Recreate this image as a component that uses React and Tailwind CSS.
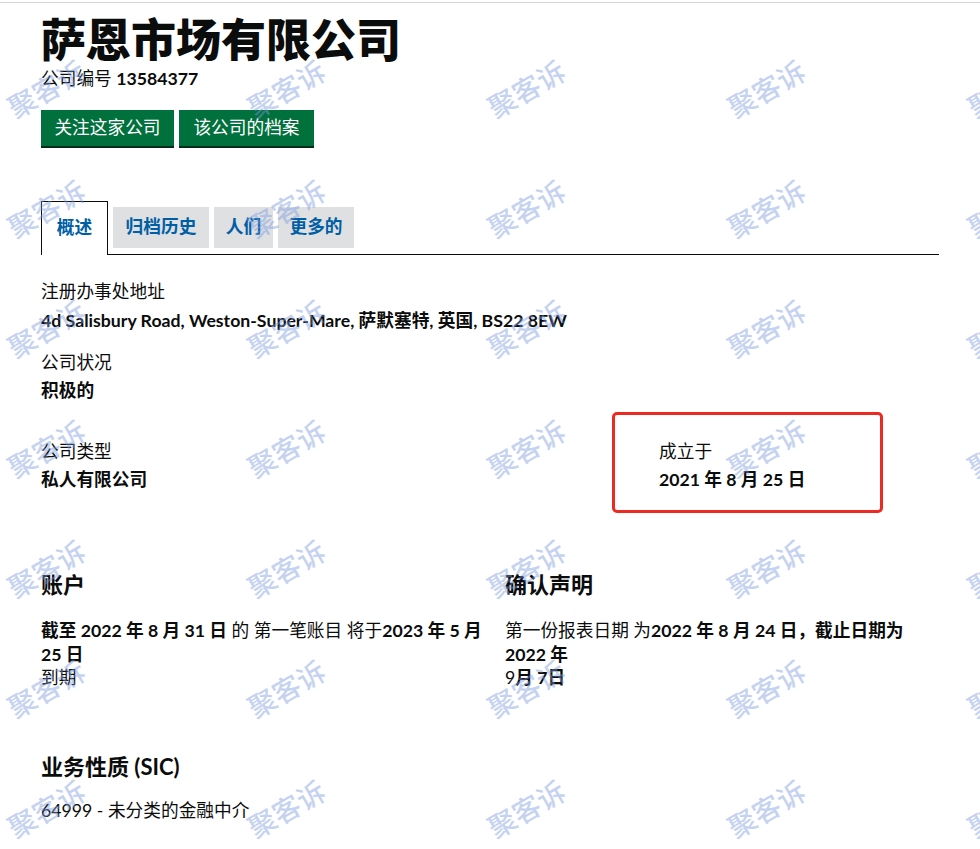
import React from "react";

// Company overview page (Companies House style), translated to Chinese,
// with a repeated "聚客诉" watermark laid over everything.
const FONT = {
  fontFamily: 'Lato, "Noto Sans CJK SC", sans-serif',
};

const tabs = [
  { key: "overview", label: "概述", width: "w-[67px]", active: true },
  { key: "filing", label: "归档历史", width: "w-[96px]" },
  { key: "people", label: "人们", width: "w-[59px]" },
  { key: "more", label: "更多的", width: "w-[76px]" },
];

function Watermark() {
  const cols = [46, 286, 526, 766, 1006];
  const rows = [88, 208, 328, 448, 568, 688, 808];
  return (
    <div className="pointer-events-none absolute inset-0 z-20 overflow-hidden">
      {rows.map((y) =>
        cols.map((x) => (
          <span
            key={`${x}-${y}`}
            className="absolute -translate-x-1/2 -translate-y-1/2 -rotate-[30deg] whitespace-nowrap text-[28px] font-medium leading-none text-[#7b9be0]/45"
            style={{ left: x, top: y, fontFamily: '"Noto Sans CJK SC", sans-serif' }}
          >
            聚客诉
          </span>
        ))
      )}
    </div>
  );
}

function Field({ label, children }) {
  return (
    <div>
      <p className="text-[17.7px] leading-[25px] text-[#0b0c0c]">{label}</p>
      <p className="mt-[3px] text-[17.7px] font-bold leading-[25px] text-[#0b0c0c]">{children}</p>
    </div>
  );
}

export default function App() {
  return (
    <div className="relative min-h-[849px] w-[980px] overflow-hidden bg-white" style={FONT}>
      <div className="h-[3px] border-b border-[#d6d6d6]" />

      <div className="px-[41px] text-[#0b0c0c]">
        <h1 className="mt-[12px] text-[45px] font-black leading-[50px]">萨恩市场有限公司</h1>
        <p className="mt-[1px] text-[17.7px] leading-[25px]">
          公司编号 <span className="font-bold">13584377</span>
        </p>

        <div className="mt-[19px] flex gap-[5px]">
          <button className="flex h-[36px] w-[133px] items-center justify-center bg-[#00703c] text-[17.7px] text-white shadow-[0_2px_0_#002d18]">
            关注这家公司
          </button>
          <button className="flex h-[36px] w-[135px] items-center justify-center bg-[#00703c] text-[17.7px] text-white shadow-[0_2px_0_#002d18]">
            该公司的档案
          </button>
        </div>

        <div className="mt-[55px] flex items-end gap-[5px] border-b border-[#0b0c0c]">
          {tabs.map((tab) =>
            tab.active ? (
              <div
                key={tab.key}
                className={`${tab.width} -mb-px flex h-[54px] items-center justify-center border border-b-0 border-[#0b0c0c] bg-white text-[17.7px] font-bold text-[#005ea5]`}
              >
                {tab.label}
              </div>
            ) : (
              <div
                key={tab.key}
                className={`${tab.width} mb-[6px] flex h-[41px] items-center justify-center bg-[#dee0e2] text-[17.7px] font-bold text-[#005ea5]`}
              >
                {tab.label}
              </div>
            )
          )}
        </div>

        <div className="mt-[24px]">
          <p className="text-[17.7px] leading-[25px]">注册办事处地址</p>
          <p className="mt-[4px] text-[17.7px] font-bold leading-[25px]">
            4d Salisbury Road, Weston-Super-Mare, 萨默塞特, 英国, BS22 8EW
          </p>
        </div>

        <div className="mt-[17px]">
          <Field label="公司状况">积极的</Field>
        </div>

        <div className="mt-[9px] flex items-start">
          <div className="w-[571px] pt-[27px]">
            <Field label="公司类型">私人有限公司</Field>
          </div>
          <div className="h-[101px] w-[271px] rounded-[5px] border-[3px] border-[#ec2a22] pl-[44px] pt-[24px]">
            <Field label="成立于">2021 年 8 月 25 日</Field>
          </div>
        </div>

        <div className="mt-[57px] grid grid-cols-2 gap-x-[30px]">
          <div>
            <h2 className="text-[22px] font-bold leading-[30px]">账户</h2>
            <p className="mt-[19px] text-[17.7px] leading-[23.5px]">
              <span className="whitespace-nowrap">
                <span className="font-bold">截至 2022 年 8 月 31 日</span> 的 第一笔账目 将于
                <span className="font-bold">2023 年 5 月</span>
              </span>
              <br />
              <span className="font-bold">25 日</span>
              <br />
              到期
            </p>
          </div>
          <div>
            <h2 className="text-[22px] font-bold leading-[30px]">确认声明</h2>
            <p className="mt-[19px] text-[17.7px] leading-[23.5px]">
              <span className="whitespace-nowrap">
                第一份报表日期 为<span className="font-bold">2022 年 8 月 24 日，截止日期为</span>
              </span>
              <br />
              <span className="font-bold">2022 年</span>
              <br />
              9<span className="font-bold">月 7日</span>
            </p>
          </div>
        </div>

        <h2 className="mt-[62px] text-[22px] font-bold leading-[30px]">业务性质 (SIC)</h2>
        <p className="mt-[16px] text-[17.7px] leading-[25px]">64999 - 未分类的金融中介</p>
      </div>

      <Watermark />
    </div>
  );
}
